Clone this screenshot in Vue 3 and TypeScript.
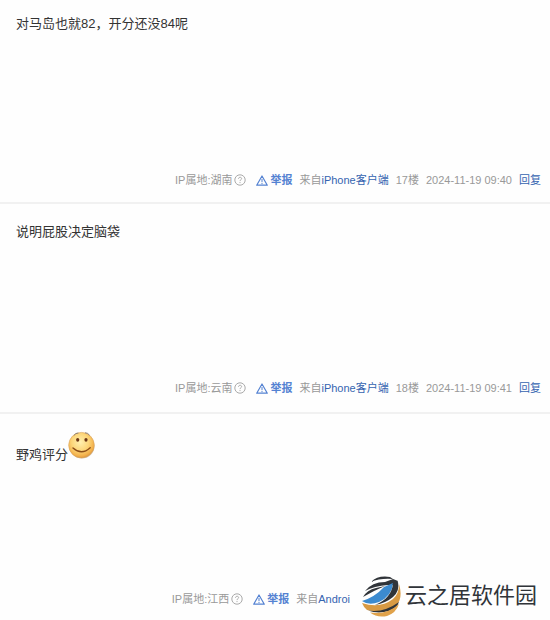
<script setup lang="ts">
interface Post {
  id: number
  text: string
  smile?: boolean
  region: string
  client: string
  floor?: string
  time?: string
}

const posts: Post[] = [
  { id: 17, text: '对马岛也就82，开分还没84呢', region: '湖南', client: 'iPhone客户端', floor: '17楼', time: '2024-11-19 09:40' },
  { id: 18, text: '说明屁股决定脑袋', region: '云南', client: 'iPhone客户端', floor: '18楼', time: '2024-11-19 09:41' },
  { id: 19, text: '野鸡评分', smile: true, region: '江西', client: 'Androi' },
]
</script>

<template>
  <main class="thread">
    <article v-for="post in posts" :key="post.id" class="post">
      <p class="content">
        <span>{{ post.text }}</span>
        <svg v-if="post.smile" class="smile" viewBox="0 0 28 28" aria-hidden="true">
          <defs>
            <radialGradient id="face" cx="45%" cy="38%" r="66%">
              <stop offset="0" stop-color="#fff0b0" />
              <stop offset="0.5" stop-color="#fcd67a" />
              <stop offset="0.82" stop-color="#f3b04a" />
              <stop offset="1" stop-color="#cf8a3d" />
            </radialGradient>
          </defs>
          <ellipse cx="14" cy="15.5" rx="12.5" ry="12" fill="#d9d4cc" />
          <circle cx="13.5" cy="14.2" r="12.8" fill="url(#face)" stroke="#d9a25a" stroke-width="0.6" />
          <path d="M6 4.2Q7.4 2 10 2M17.4 1.8Q20 1.8 21.4 4" fill="none" stroke="#8d8174" stroke-width="1" stroke-linecap="round" />
          <ellipse cx="9.7" cy="8.8" rx="1.6" ry="1.9" fill="#6b3514" />
          <ellipse cx="18" cy="8.8" rx="1.6" ry="1.9" fill="#6b3514" />
          <path d="M5 17Q13.5 24.8 22.2 16.8" fill="none" stroke="#8a4b17" stroke-width="1.4" stroke-linecap="round" />
        </svg>
      </p>
      <footer class="meta">
        <span class="region">
          <span class="label">IP属地:{{ post.region }}</span>
          <svg class="help" viewBox="0 0 12 12" aria-hidden="true">
            <circle cx="6" cy="6" r="5.2" fill="none" stroke="#aaa" />
            <path d="M4.5 4.8C4.5 2.8 7.6 2.8 7.6 4.6C7.6 5.8 6 5.7 6 7.1M6 8.1V9.1" fill="none" stroke="#aaa" />
          </svg>
        </span>
        <a class="report" href="#">
          <svg class="warn" viewBox="0 0 12 11" aria-hidden="true">
            <path d="M6 1L11.3 10.2H0.7Z" fill="none" stroke="#5482d2" stroke-width="1.2" stroke-linejoin="round" />
            <path d="M6 4V7.2M6 8V9.2" stroke="#5482d2" />
          </svg>
          <span class="label">举报</span>
        </a>
        <span>来自<a href="#">{{ post.client }}</a></span>
        <span v-if="post.floor">{{ post.floor }}</span>
        <time v-if="post.time">{{ post.time }}</time>
        <a v-if="post.time" href="#">回复</a>
        <div v-else class="brand">
          <svg class="globe" viewBox="0 0 40 42" aria-hidden="true">
            <path d="M10 7Q17 0 29 2L32 4Q19 3 10 7Z" fill="#303439" />
            <path d="M4 16Q11 7 24 7L32 4L37 6Q36 11 27 10Q13 11 4 16Z" fill="#303439" />
            <path d="M2 22Q6 15 15 13L24 11Q12 16 2 22Z" fill="#303439" />
            <path d="M1 26Q14 22 23 12L32 8Q31 21 18 27Q8 31 1 26Z" fill="#3c8bd0" />
            <path d="M32 8L37 7Q39 16 32 22Q25 28 14 30Q31 23 32 8Z" fill="#303439" />
            <path d="M1 28Q19 34 32 24Q38 19 38 9Q42 22 36 30Q23 39 6 35Q3 33 1 28Z" fill="#d89a43" />
            <path d="M7 35.5Q23 38 38 27Q36 33 28 36Q17 39 7 35.5Z" fill="#303439" />
            <path d="M9 37.5Q26 40 38 29Q35 38 26 41Q16 43 9 37.5Z" fill="#e0a24b" />
          </svg>
          <span class="brand-name">云之居软件园</span>
        </div>
      </footer>
    </article>
  </main>
</template>

<style>
body {
  background: #fefefe;
}
</style>

<style scoped>
.thread {
  font-family: "Liberation Sans", "Noto Sans CJK SC", sans-serif;
  color: #333;
}

.post {
  display: flex;
  flex-direction: column;
  justify-content: space-between;
  box-sizing: border-box;
  min-height: 210px;
  padding: 18px 9px 14px 16px;
  border-bottom: 2px solid #f1f1f1;
}

.post:first-child {
  min-height: 204px;
  padding-top: 14px;
  padding-bottom: 12px;
}

.post:last-child {
  min-height: 206px;
  padding-top: 17px;
  padding-bottom: 3px;
  border-bottom: 0;
}

.content {
  display: flex;
  align-items: flex-end;
  margin: 0;
  font-size: 13px;
  line-height: 20px;
}

.smile {
  width: 28px;
  height: 28px;
  margin-bottom: 6px;
}

.meta {
  display: flex;
  justify-content: flex-end;
  align-items: baseline;
  gap: 7px;
  font-size: 11px;
  line-height: 20px;
  white-space: nowrap;
  color: #999;
}

.meta a {
  color: #3564b0;
  text-decoration: none;
}

.label {
  align-self: baseline;
}

.region {
  display: flex;
  align-items: center;
  gap: 2px;
  margin-right: 3px;
}

.help {
  width: 12px;
  height: 12px;
}

.meta .report {
  display: flex;
  align-items: center;
  gap: 2px;
  font-weight: bold;
  color: #5482d2;
}

.warn {
  width: 12px;
  height: 11px;
}

.brand {
  display: flex;
  align-items: center;
  gap: 4px;
  margin-left: 4px;
  margin-right: 4px;
  color: #303439;
}

.globe {
  width: 40px;
  height: 42px;
}

.brand-name {
  align-self: baseline;
  font-size: 22px;
  line-height: 42px;
}
</style>
